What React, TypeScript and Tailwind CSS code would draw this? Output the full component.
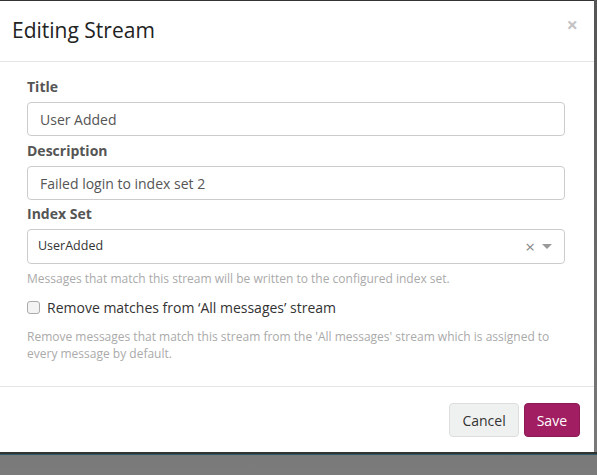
import React from 'react';

function FieldLabel({ children }: { children: React.ReactNode }) {
  return <label className="block text-[14px] font-bold leading-[20px] text-[#555] mb-[5px]">{children}</label>;
}

function TextInput({ value }: { value: string }) {
  return (
    <div className="h-[34px] w-full rounded-[4px] border border-[#ccc] px-[12px] flex items-center text-[14px] text-[#555]">
      {value}
    </div>
  );
}

export default function App() {
  return (
    <div
      className="w-[597px] h-[475px] overflow-hidden bg-gradient-to-b from-[#555] to-[#7b7b7b] flex flex-col"
      style={{ fontFamily: '"Open Sans", "Liberation Sans", sans-serif' }}
    >
      <div className="w-[594px] h-[452px] shrink-0 bg-white border-t border-[#333] flex flex-col">
        {/* header */}
        <div className="h-[61px] border-b border-[#e5e5e5] flex items-center justify-between pl-[12px] pr-[16px]">
          <h4 className="text-[21px] text-[#222] font-normal leading-none mt-[-2px]">Editing Stream</h4>
          <span className="text-[#c4c4c4] text-[20px] font-bold leading-none mt-[-12px]">×</span>
        </div>

        {/* body */}
        <div className="px-[27px] pt-[15px] flex-1 border-b border-[#e5e5e5]">
          <div className="w-[538px]">
            <FieldLabel>Title</FieldLabel>
            <TextInput value="User Added" />
            <div className="h-[5px]" />
            <FieldLabel>Description</FieldLabel>
            <TextInput value="Failed login to index set 2" />
            <div className="h-[4px]" />
            <FieldLabel>Index Set</FieldLabel>
            <div className="h-[35px] w-full rounded-[4px] border border-[#ccc] pl-[10px] pr-[12px] flex items-center text-[12.5px] text-[#333]">
              <span className="flex-1">UserAdded</span>
              <span className="text-[#888] text-[17px] leading-none mr-[7px] mt-[-1px]">×</span>
              <span className="w-0 h-0 border-l-[5px] border-r-[5px] border-t-[5px] border-l-transparent border-r-transparent border-t-[#999]" />
            </div>
            <p className="text-[12px] text-[#aaa] leading-[17px] mt-[6px]">
              Messages that match this stream will be written to the configured index set.
            </p>
            <div className="flex items-center mt-[10px] h-[20px]">
              <span className="w-[13px] h-[13px] rounded-[3px] border border-[#aaa] bg-[#f3f3f3] mr-[7px]" />
              <span className="text-[14px] text-[#333]">Remove matches from ‘All messages’ stream</span>
            </div>
            <p className="text-[12px] text-[#aaa] leading-[17px] mt-[11px]">
              Remove messages that match this stream from the 'All messages' stream which is assigned to every message by default.
            </p>
          </div>
        </div>

        {/* footer */}
        <div className="h-[65px] shrink-0 flex items-center justify-end gap-[5px] pr-[14px] pt-[1px]">
          <button className="h-[34px] px-[12px] rounded-[4px] border border-[#ddd] bg-[#eff1f1] text-[14px] text-[#333]">
            Cancel
          </button>
          <button className="h-[34px] px-[12px] rounded-[4px] border border-[#8d1a55] bg-[#a21e62] text-[14px] text-white">
            Save
          </button>
        </div>
      </div>
      <div className="h-[2px] bg-[#333]" />
      <div className="h-[1px] bg-[#2c5868]" />
    </div>
  );
}
